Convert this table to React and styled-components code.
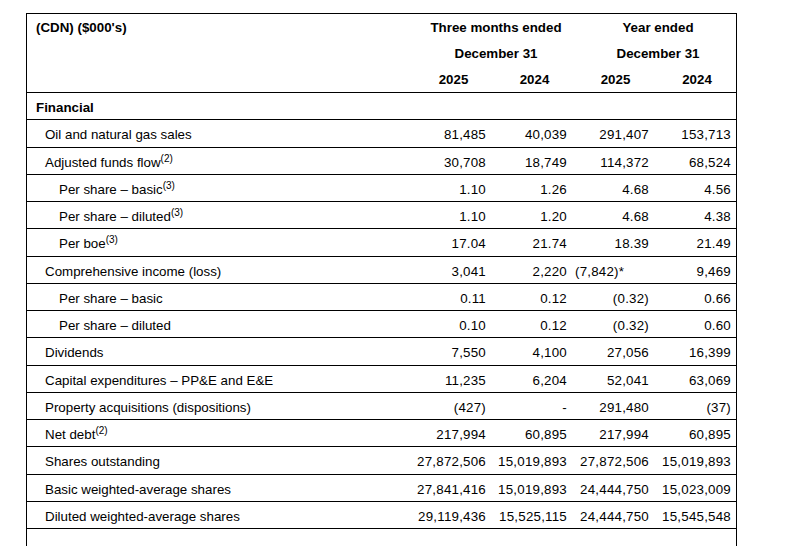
import React from "react";
import styled, { createGlobalStyle } from "styled-components";

const GlobalStyle = createGlobalStyle`
  html, body {
    margin: 0;
    padding: 0;
    background: #ffffff;
    overflow: hidden;
  }
  body {
    font-family: "Liberation Sans", Arial, sans-serif;
    font-size: 13.33px;
    color: #000000;
  }
`;

const Page = styled.div`
  padding: 13px 0 0 26px;
`;

const Table = styled.div`
  width: 711px;
  box-sizing: border-box;
  border: 1px solid #000;
  border-bottom: none;
`;

const COLS = "382px 82px 81px 82px 82px";

const HeaderRow = styled.div`
  display: grid;
  grid-template-columns: ${COLS};
  grid-template-rows: 26px 26px 25px;
  padding-top: 1px;
  border-bottom: 1px solid #000;
  font-weight: bold;
  line-height: 26px;
`;

const Title = styled.div`
  grid-row: 1 / span 3;
  grid-column: 1;
  padding-left: 9px;
`;

const GroupHead = styled.div`
  grid-column: ${(p) => p.$col} / span 2;
  grid-row: ${(p) => p.$row};
  text-align: center;
  white-space: nowrap;
  padding-left: ${(p) => p.$shift || 10}px;
`;

const YearHead = styled.div`
  grid-column: ${(p) => p.$col};
  grid-row: 3;
  text-align: center;
  padding-left: ${(p) => p.$shift}px;
`;

const Row = styled.div`
  display: grid;
  grid-template-columns: ${COLS};
  height: 27.25px;
  box-sizing: border-box;
  border-bottom: 1px solid #000;
  align-items: center;
  padding-top: 3px;
  line-height: 15px;
  font-weight: ${(p) => (p.$bold ? "bold" : "normal")};
`;

const Label = styled.div`
  padding-left: ${(p) => p.$indent}px;
  white-space: nowrap;
`;

const Num = styled.div`
  text-align: right;
  padding-right: 5px;
  white-space: nowrap;
  letter-spacing: 0.22px;
`;

const LeftNum = styled.div`
  text-align: left;
  padding-left: 3px;
  white-space: nowrap;
  letter-spacing: 0.22px;
`;

const Sup = styled.sup`
  font-size: 10px;
  line-height: 0;
  vertical-align: 5px;
`;

const rows = [
  { label: "Oil and natural gas sales", indent: 18, v: ["81,485", "40,039", "291,407", "153,713"] },
  { label: "Adjusted funds flow", sup: "(2)", indent: 18, v: ["30,708", "18,749", "114,372", "68,524"] },
  { label: "Per share \u2013 basic", sup: "(3)", indent: 32, v: ["1.10", "1.26", "4.68", "4.56"] },
  { label: "Per share \u2013 diluted", sup: "(3)", indent: 32, v: ["1.10", "1.20", "4.68", "4.38"] },
  { label: "Per boe", sup: "(3)", indent: 32, v: ["17.04", "21.74", "18.39", "21.49"] },
  { label: "Comprehensive income (loss)", indent: 18, v: ["3,041", "2,220", "(7,842)*", "9,469"], leftCol: 2 },
  { label: "Per share \u2013 basic", indent: 32, v: ["0.11", "0.12", "(0.32)", "0.66"] },
  { label: "Per share \u2013 diluted", indent: 32, v: ["0.10", "0.12", "(0.32)", "0.60"] },
  { label: "Dividends", indent: 18, v: ["7,550", "4,100", "27,056", "16,399"] },
  { label: "Capital expenditures \u2013 PP&E and E&E", indent: 18, v: ["11,235", "6,204", "52,041", "63,069"] },
  { label: "Property acquisitions (dispositions)", indent: 18, v: ["(427)", "-", "291,480", "(37)"] },
  { label: "Net debt", sup: "(2)", indent: 18, v: ["217,994", "60,895", "217,994", "60,895"] },
  { label: "Shares outstanding", indent: 18, v: ["27,872,506", "15,019,893", "27,872,506", "15,019,893"] },
  { label: "Basic weighted-average shares", indent: 18, v: ["27,841,416", "15,019,893", "24,444,750", "15,023,009"] },
  { label: "Diluted weighted-average shares", indent: 18, v: ["29,119,436", "15,525,115", "24,444,750", "15,545,548"] },
];

export default function App() {
  return (
    <>
      <GlobalStyle />
      <Page>
        <Table>
          <HeaderRow>
            <Title>(CDN) ($000's)</Title>
            <GroupHead $col={2} $row={1} $shift={11}>Three months ended</GroupHead>
            <GroupHead $col={4} $row={1} $shift={8}>Year ended</GroupHead>
            <GroupHead $col={2} $row={2} $shift={11}>December 31</GroupHead>
            <GroupHead $col={4} $row={2} $shift={8}>December 31</GroupHead>
            <YearHead $col={2} $shift={7}>2025</YearHead>
            <YearHead $col={3} $shift={6}>2024</YearHead>
            <YearHead $col={4} $shift={5}>2025</YearHead>
            <YearHead $col={5} $shift={4}>2024</YearHead>
          </HeaderRow>
          <Row $bold>
            <Label $indent={9}>Financial</Label>
          </Row>
          {rows.map((r, i) => (
            <Row key={i}>
              <Label $indent={r.indent}>
                {r.label}
                {r.sup && <Sup>{r.sup}</Sup>}
              </Label>
              {r.v.map((val, j) =>
                r.leftCol === j ? (
                  <LeftNum key={j}>{val}</LeftNum>
                ) : (
                  <Num key={j}>{val}</Num>
                )
              )}
            </Row>
          ))}
          <Row />
        </Table>
      </Page>
    </>
  );
}
